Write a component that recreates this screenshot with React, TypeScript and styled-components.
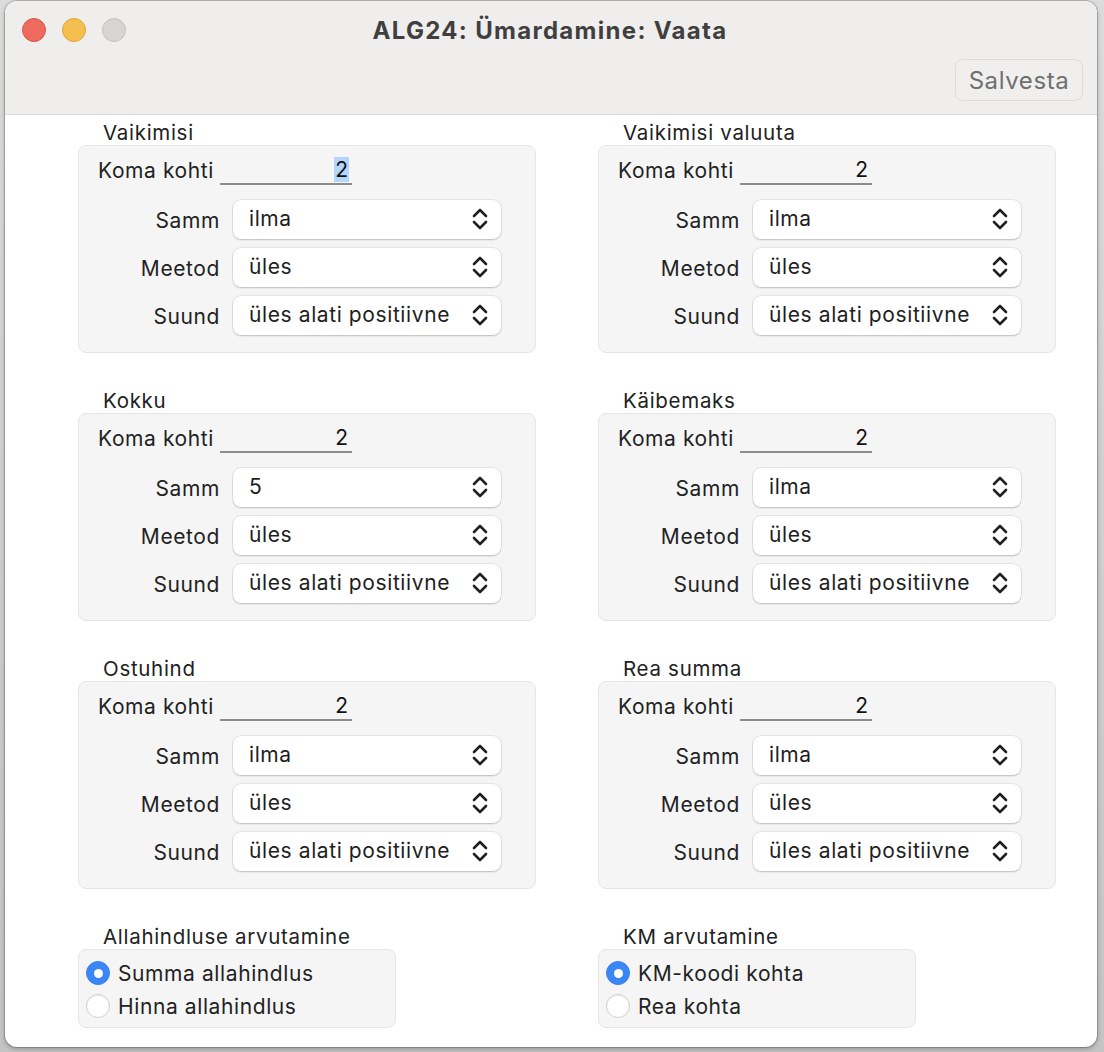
import styled, { createGlobalStyle } from "styled-components";

const GlobalStyle = createGlobalStyle`
  html, body {
    margin: 0;
    padding: 0;
    background: #d2d2d2;
  }
  body {
    font-family: Inter, "Noto Sans", "Liberation Sans", sans-serif;
    color: #222;
  }
`;

const Page = styled.div`
  width: 1104px;
  height: 1052px;
  padding: 1px 7px 0 5px;
  box-sizing: border-box;
  background: linear-gradient(#dcdcdc, #c4c4c4);
`;

const Window = styled.div`
  width: 1092px;
  height: 1046px;
  border-radius: 12px;
  overflow: hidden;
  background: #fff;
  display: flex;
  flex-direction: column;
  box-shadow: 0 0 0 1px rgba(0, 0, 0, 0.18), 0 2px 5px rgba(0, 0, 0, 0.25);
`;

const TitleBar = styled.div`
  background: #efeeed;
  border-bottom: 1px solid #dadada;
  height: 114px;
  box-sizing: border-box;
  display: flex;
  flex-direction: column;
`;

const TitleRow = styled.div`
  position: relative;
  height: 58px;
  display: flex;
  align-items: center;
  justify-content: center;
`;

const Lights = styled.div`
  position: absolute;
  left: 17px;
  top: 17px;
  display: flex;
  gap: 16px;
`;

const Light = styled.span<{ $color: string; $edge: string }>`
  width: 24px;
  height: 24px;
  border-radius: 50%;
  box-sizing: border-box;
  background: ${(p) => p.$color};
  border: 1px solid ${(p) => p.$edge};
`;

const Title = styled.div`
  font-size: 24px;
  font-weight: 700;
  letter-spacing: 1.3px;
  color: #3f3f3f;
  margin-left: -2px;
`;

const Toolbar = styled.div`
  display: flex;
  justify-content: flex-end;
  padding: 0 14px;
`;

const SaveButton = styled.button`
  width: 128px;
  height: 42px;
  border: 1.5px solid #dddcdb;
  border-radius: 8px;
  background: #f0efee;
  color: #6f6f6f;
  font-family: inherit;
  font-size: 24px;
  letter-spacing: 0.6px;
  padding: 0;
`;

const Content = styled.div`
  flex: 1;
  display: grid;
  grid-template-columns: 458px 458px;
  column-gap: 62px;
  row-gap: 34px;
  align-content: start;
  padding: 4px 0 0 73px;
`;

const Group = styled.div`
  display: flex;
  flex-direction: column;
`;

const GroupLabel = styled.div`
  font-size: 20.5px;
  letter-spacing: 0.7px;
  line-height: 24px;
  height: 24px;
  padding-top: 2px;
  box-sizing: border-box;
  margin: 0 0 2px 25px;
  color: #222;
`;

const Panel = styled.div<{ $width?: number }>`
  width: ${(p) => (p.$width ? `${p.$width}px` : "auto")};
  box-sizing: border-box;
  background: #f5f5f5;
  border: 1px solid #e6e6e6;
  border-radius: 8px;
`;

const FieldPanel = styled(Panel)`
  height: 208px;
  padding: 9px 0 0 19px;
  display: flex;
  flex-direction: column;
`;

const KomaRow = styled.div`
  display: flex;
  align-items: center;
  height: 30px;
  margin-bottom: 15px;
  font-size: 21px;
  letter-spacing: 0.6px;
`;

const KomaLabel = styled.span`
  width: 122px;
  flex: none;
  color: #222;
`;

const NumberField = styled.div`
  width: 132px;
  height: 30px;
  box-sizing: border-box;
  border-bottom: 2px solid #8c8c8c;
  display: flex;
  align-items: center;
  justify-content: flex-end;
  padding-right: 3px;
  color: #111;
`;

const Selected = styled.span<{ $on: boolean }>`
  background: ${(p) => (p.$on ? "#b4d6fc" : "transparent")};
  padding: 0 1px;
  line-height: 25px;
  letter-spacing: 0;
`;

const SelectRows = styled.div`
  display: grid;
  grid-template-columns: 122px 268px;
  column-gap: 13px;
  row-gap: 9px;
  align-items: center;
`;

const RowLabel = styled.span`
  font-size: 21px;
  letter-spacing: 0.6px;
  text-align: right;
  color: #222;
  padding-top: 2px;
`;

const Select = styled.div`
  height: 39px;
  box-sizing: border-box;
  background: #fff;
  border-radius: 8px;
  box-shadow: 0 0 0 0.5px rgba(0, 0, 0, 0.12), 0 1px 2px rgba(0, 0, 0, 0.18);
  display: flex;
  align-items: center;
  justify-content: space-between;
  padding: 0 13px 2px 16px;
  font-size: 21px;
  letter-spacing: 0.6px;
  color: #1e1e1e;
`;

const RadioPanel = styled(Panel)`
  height: 79px;
  padding: 11px 0 0 7px;
  display: flex;
  flex-direction: column;
  gap: 9px;
`;

const RadioRow = styled.label`
  display: flex;
  align-items: center;
  gap: 8px;
  height: 24px;
  font-size: 21px;
  letter-spacing: 0.6px;
  color: #222;
`;

const RadioDot = styled.span<{ $on: boolean }>`
  width: 24px;
  height: 24px;
  border-radius: 50%;
  box-sizing: border-box;
  flex: none;
  display: flex;
  align-items: center;
  justify-content: center;
  background: ${(p) => (p.$on ? "#3a86f7" : "#fff")};
  border: 1px solid ${(p) => (p.$on ? "#3a80ec" : "#cfcfcf")};
  box-shadow: ${(p) => (p.$on ? "none" : "inset 0 1px 1px rgba(0,0,0,0.06)")};
  &::after {
    content: "";
    display: ${(p) => (p.$on ? "block" : "none")};
    width: 9px;
    height: 9px;
    border-radius: 50%;
    background: #fff;
  }
`;

const Chevrons = () => (
  <svg width="16" height="22" viewBox="0 0 16 22" fill="none">
    <path d="M2 8 L8 2 L14 8" stroke="#222" strokeWidth="2.6" strokeLinecap="round" strokeLinejoin="round" />
    <path d="M2 14 L8 20 L14 14" stroke="#222" strokeWidth="2.6" strokeLinecap="round" strokeLinejoin="round" />
  </svg>
);

type Rounding = {
  title: string;
  samm: string;
  highlight?: boolean;
};

const groups: Rounding[] = [
  { title: "Vaikimisi", samm: "ilma", highlight: true },
  { title: "Vaikimisi valuuta", samm: "ilma" },
  { title: "Kokku", samm: "5" },
  { title: "Käibemaks", samm: "ilma" },
  { title: "Ostuhind", samm: "ilma" },
  { title: "Rea summa", samm: "ilma" },
];

const radios = [
  { title: "Allahindluse arvutamine", options: ["Summa allahindlus", "Hinna allahindlus"] },
  { title: "KM arvutamine", options: ["KM-koodi kohta", "Rea kohta"] },
];

function FieldGroup({ g }: { g: Rounding }) {
  const rows = [
    ["Samm", g.samm],
    ["Meetod", "üles"],
    ["Suund", "üles alati positiivne"],
  ];
  return (
    <Group>
      <GroupLabel>{g.title}</GroupLabel>
      <FieldPanel>
        <KomaRow>
          <KomaLabel>Koma kohti</KomaLabel>
          <NumberField>
            <Selected $on={!!g.highlight}>2</Selected>
          </NumberField>
        </KomaRow>
        <SelectRows>
          {rows.flatMap(([label, value]) => [
            <RowLabel key={label + "l"}>{label}</RowLabel>,
            <Select key={label + "s"}>
              <span>{value}</span>
              <Chevrons />
            </Select>,
          ])}
        </SelectRows>
      </FieldPanel>
    </Group>
  );
}

export default function App() {
  return (
    <Page>
      <GlobalStyle />
      <Window>
        <TitleBar>
          <TitleRow>
            <Lights>
              <Light $color="#ed6a5e" $edge="#d6564b" />
              <Light $color="#f5bf4f" $edge="#dba43c" />
              <Light $color="#d6d5d4" $edge="#c3c2c1" />
            </Lights>
            <Title>ALG24: Ümardamine: Vaata</Title>
          </TitleRow>
          <Toolbar>
            <SaveButton>Salvesta</SaveButton>
          </Toolbar>
        </TitleBar>
        <Content>
          {groups.map((g) => (
            <FieldGroup key={g.title} g={g} />
          ))}
          {radios.map((r) => (
            <Group key={r.title}>
              <GroupLabel>{r.title}</GroupLabel>
              <RadioPanel $width={318}>
                {r.options.map((o, i) => (
                  <RadioRow key={o}>
                    <RadioDot $on={i === 0} />
                    {o}
                  </RadioRow>
                ))}
              </RadioPanel>
            </Group>
          ))}
        </Content>
      </Window>
    </Page>
  );
}
